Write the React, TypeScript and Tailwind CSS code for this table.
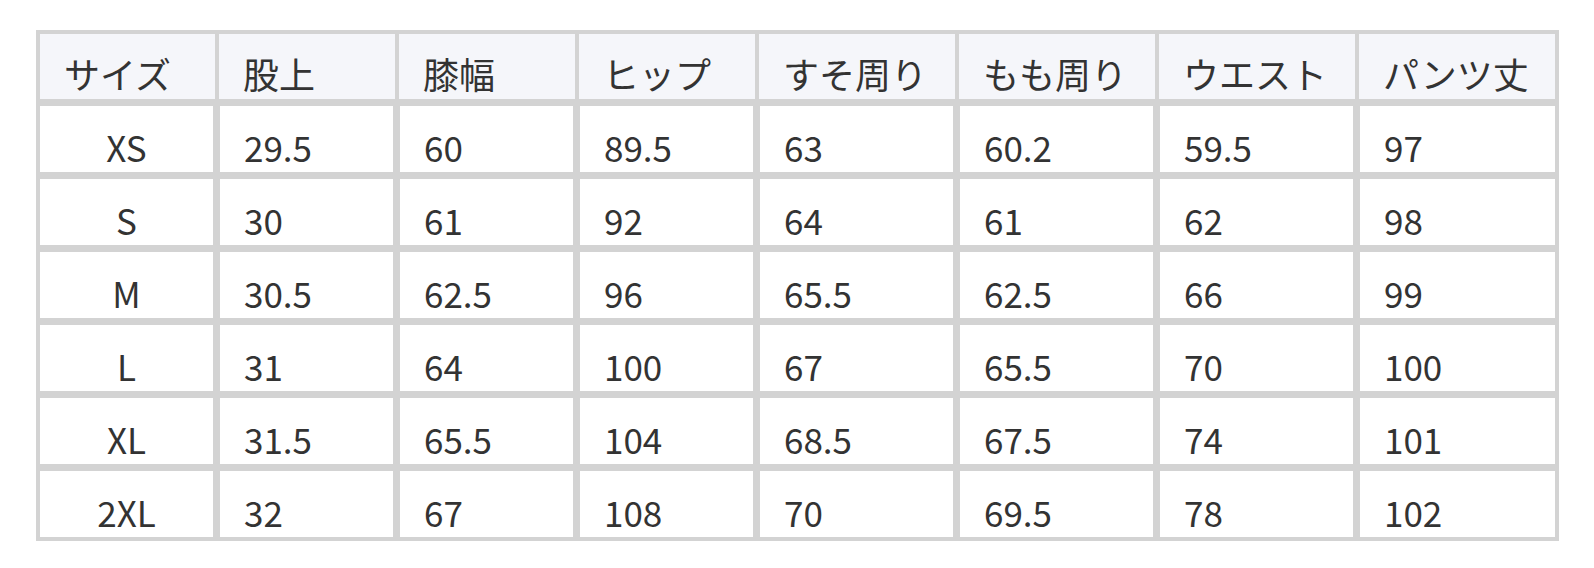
import React from "react";

const headers = ["サイズ", "股上", "膝幅", "ヒップ", "すそ周り", "もも周り", "ウエスト", "パンツ丈"];
const rows = [
  ["XS", "29.5", "60", "89.5", "63", "60.2", "59.5", "97"],
  ["S", "30", "61", "92", "64", "61", "62", "98"],
  ["M", "30.5", "62.5", "96", "65.5", "62.5", "66", "99"],
  ["L", "31", "64", "100", "67", "65.5", "70", "100"],
  ["XL", "31.5", "65.5", "104", "68.5", "67.5", "74", "101"],
  ["2XL", "32", "67", "108", "70", "69.5", "78", "102"],
];

export default function App() {
  return (
    <div
      className="w-[1594px] h-[568px] bg-white pt-[30px] pl-[36px] text-[#333333]"
      style={{ fontFamily: '"Noto Sans CJK JP", "Noto Sans", sans-serif' }}
    >
      <div className="w-[1523px] border-[4px] border-[#d3d3d3] bg-[#d3d3d3] flex flex-col gap-[7px]">
        <div className="grid grid-cols-[175px_176px_176px_176px_196px_196px_196px_196px] gap-[4px]">
          {headers.map((h) => (
            <div key={h} className="h-[65px] bg-[#f5f6fa] flex items-end pl-[24px] text-[36px] leading-[52px]">
              {h}
            </div>
          ))}
        </div>
        {rows.map((r) => (
          <div key={r[0]} className="grid grid-cols-[173px_173px_173px_173px_193px_193px_193px_195px] gap-[7px]">
            {r.map((c, i) => (
              <div
                key={i}
                className={
                  i === 0
                    ? "h-[66px] bg-white flex items-end justify-center text-[35px] leading-[51px]"
                    : "h-[66px] bg-white flex items-end pl-[24px] text-[35px] leading-[51px]"
                }
              >
                {c}
              </div>
            ))}
          </div>
        ))}
      </div>
    </div>
  );
}
